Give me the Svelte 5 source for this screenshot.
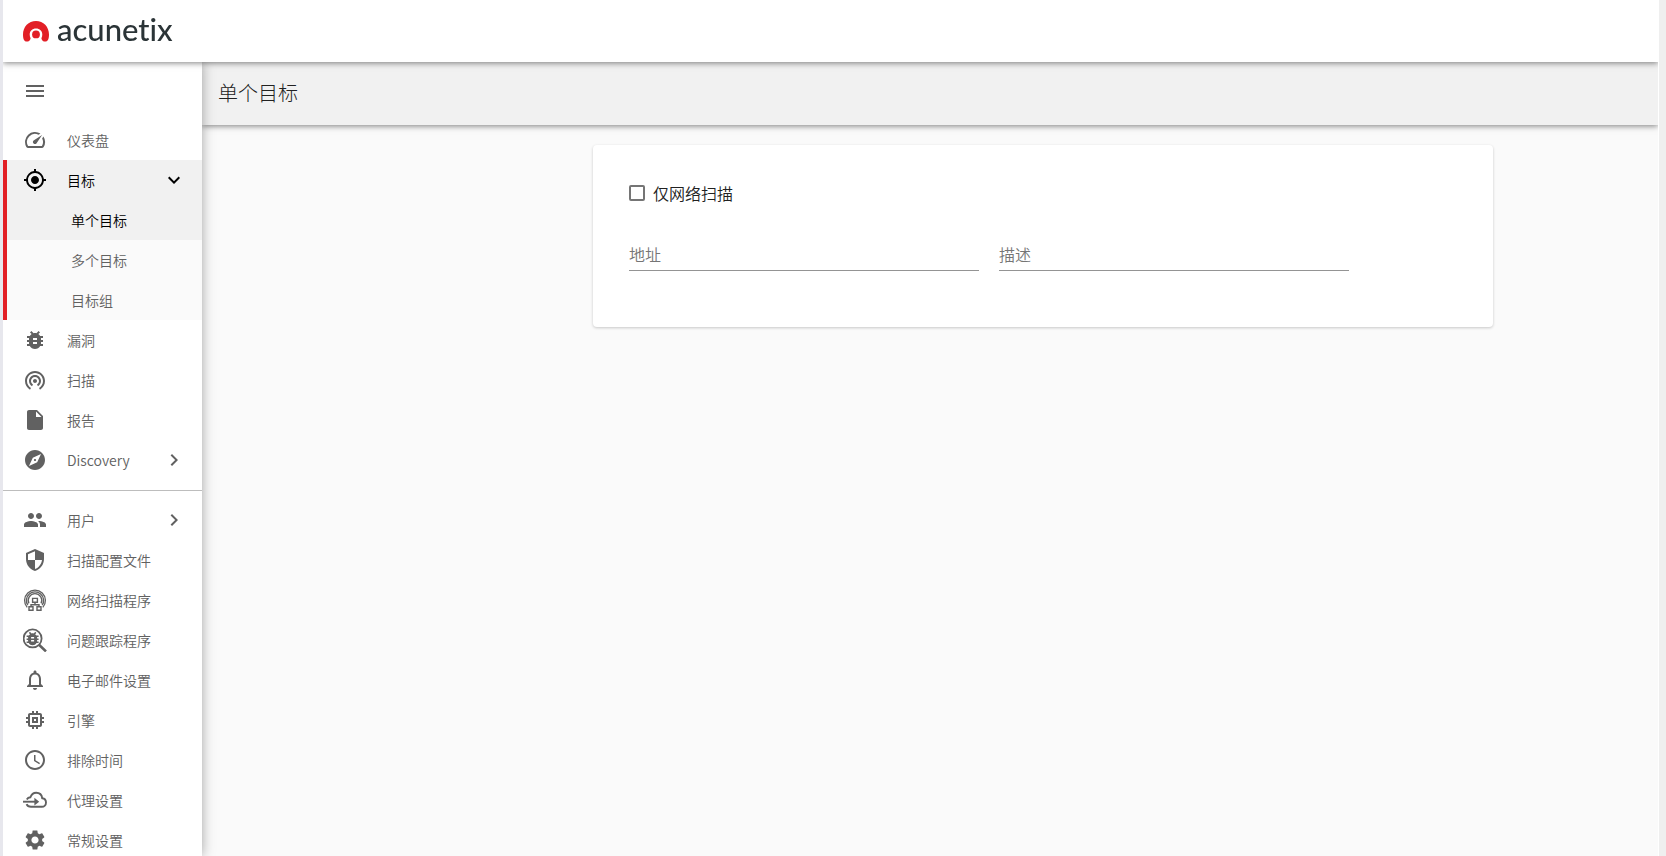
<script lang="ts">
    type Item = { id: string; label: string; icon: string; arrow?: boolean };

    const icons: Record<string, string> = {
        menu: "M3 18h18v-2H3v2zm0-5h18v-2H3v2zm0-7v2h18V6H3z",
        speed: "M20.38 8.57l-1.23 1.85a8 8 0 0 1-.22 7.58H5.07A8 8 0 0 1 15.58 6.85l1.85-1.23A10 10 0 0 0 3.35 19a2 2 0 0 0 1.72 1h13.85a2 2 0 0 0 1.74-1 10 10 0 0 0-.27-10.44zm-9.79 6.84a2 2 0 0 0 2.83 0l5.66-8.49-8.49 5.66a2 2 0 0 0 0 2.83z",
        target: "M12 8c-2.21 0-4 1.79-4 4s1.79 4 4 4 4-1.79 4-4-1.79-4-4-4zm8.94 3A8.994 8.994 0 0 0 13 3.06V1h-2v2.06A8.994 8.994 0 0 0 3.06 11H1v2h2.06A8.994 8.994 0 0 0 11 20.94V23h2v-2.06A8.994 8.994 0 0 0 20.94 13H23v-2h-2.06zM12 19c-3.87 0-7-3.13-7-7s3.13-7 7-7 7 3.13 7 7-3.13 7-7 7z",
        bug: "M20 8h-2.81c-.45-.78-1.07-1.45-1.82-1.96L17 4.41 15.59 3l-2.17 2.17C12.96 5.06 12.49 5 12 5c-.49 0-.96.06-1.41.17L8.41 3 7 4.41l1.62 1.63C7.88 6.55 7.26 7.22 6.81 8H4v2h2.09c-.05.33-.09.66-.09 1v1H4v2h2v1c0 .34.04.67.09 1H4v2h2.81c1.04 1.79 2.97 3 5.19 3s4.15-1.21 5.19-3H20v-2h-2.09c.05-.33.09-.66.09-1v-1h2v-2h-2v-1c0-.34-.04-.67-.09-1H20V8zm-6 8h-4v-2h4v2zm0-4h-4v-2h4v2z",
        scan: "M12 11c-1.1 0-2 .9-2 2s.9 2 2 2 2-.9 2-2-.9-2-2-2zm6 2c0-3.31-2.69-6-6-6s-6 2.69-6 6c0 2.22 1.21 4.15 3 5.19l1-1.74c-1.19-.7-2-1.97-2-3.45 0-2.21 1.79-4 4-4s4 1.79 4 4c0 1.48-.81 2.75-2 3.45l1 1.74c1.79-1.04 3-2.97 3-5.19zM12 3C6.48 3 2 7.48 2 13c0 3.7 2.01 6.92 4.99 8.65l1-1.73C5.61 18.53 4 15.96 4 13c0-4.42 3.58-8 8-8s8 3.58 8 8c0 2.96-1.61 5.53-4 6.92l1 1.73c2.99-1.73 5-4.95 5-8.65 0-5.52-4.48-10-10-10z",
        file: "M6 2c-1.1 0-1.99.9-1.99 2L4 20c0 1.1.89 2 1.99 2H18c1.1 0 2-.9 2-2V8l-6-6H6zm7 7V3.5L18.5 9H13z",
        explore: "M12 10.9c-.61 0-1.1.49-1.1 1.1s.49 1.1 1.1 1.1c.61 0 1.1-.49 1.1-1.1s-.49-1.1-1.1-1.1zM12 2C6.48 2 2 6.48 2 12s4.48 10 10 10 10-4.48 10-10S17.52 2 12 2zm2.19 12.19L6 18l3.81-8.19L18 6l-3.81 8.19z",
        people: "M16 11c1.66 0 2.99-1.34 2.99-3S17.66 5 16 5c-1.66 0-3 1.34-3 3s1.34 3 3 3zm-8 0c1.66 0 2.99-1.34 2.99-3S9.66 5 8 5C6.34 5 5 6.34 5 8s1.34 3 3 3zm0 2c-2.33 0-7 1.17-7 3.5V19h14v-2.5c0-2.33-4.67-3.5-7-3.5zm8 0c-.29 0-.62.02-.97.05 1.16.84 1.97 1.97 1.97 3.45V19h6v-2.5c0-2.33-4.67-3.5-7-3.5z",
        shield: "M12 1L3 5v6c0 5.55 3.84 10.74 9 12 5.16-1.26 9-6.45 9-12V5l-9-4zm0 10.99h7c-.53 4.12-3.28 7.79-7 8.94V12H5V6.3l7-3.11v8.8z",
        bell: "M12 22c1.1 0 2-.9 2-2h-4c0 1.1.89 2 2 2zm6-6v-5c0-3.07-1.64-5.64-4.5-6.32V4c0-.83-.67-1.5-1.5-1.5s-1.5.67-1.5 1.5v.68C7.63 5.36 6 7.92 6 11v5l-2 2v1h16v-1l-2-2zm-2 1H8v-6c0-2.48 1.51-4.5 4-4.5s4 2.02 4 4.5v6z",
        chip: "M15 9H9v6h6V9zm-2 4h-2v-2h2v2zm8-2V9h-2V7c0-1.1-.9-2-2-2h-2V3h-2v2h-2V3H9v2H7c-1.1 0-2 .9-2 2v2H3v2h2v2H3v2h2v2c0 1.1.9 2 2 2h2v2h2v-2h2v2h2v-2h2c1.1 0 2-.9 2-2v-2h2v-2h-2v-2h2zm-4 6H7V7h10v10z",
        clock: "M11.99 2C6.47 2 2 6.48 2 12s4.47 10 9.99 10C17.52 22 22 17.52 22 12S17.52 2 11.99 2zM12 20c-4.42 0-8-3.58-8-8s3.58-8 8-8 8 3.58 8 8-3.58 8-8 8zm.5-13H11v6l5.25 3.15.75-1.23-4.5-2.67z",
        gear: "M19.14 12.94c.04-.3.06-.61.06-.94 0-.32-.02-.64-.07-.94l2.03-1.58c.18-.14.23-.41.12-.61l-1.92-3.32c-.12-.22-.37-.29-.59-.22l-2.39.96c-.5-.38-1.03-.7-1.62-.94l-.36-2.54c-.04-.24-.24-.41-.48-.41h-3.84c-.24 0-.43.17-.47.41l-.36 2.54c-.59.24-1.13.57-1.62.94l-2.39-.96c-.22-.08-.47 0-.59.22L2.74 8.87c-.12.21-.08.47.12.61l2.03 1.58c-.05.3-.09.63-.09.94s.02.64.07.94l-2.03 1.58c-.18.14-.23.41-.12.61l1.92 3.32c.12.22.37.29.59.22l2.39-.96c.5.38 1.03.7 1.62.94l.36 2.54c.05.24.24.41.48.41h3.84c.24 0 .44-.17.47-.41l.36-2.54c.59-.24 1.13-.56 1.62-.94l2.39.96c.22.08.47 0 .59-.22l1.92-3.32c.12-.22.07-.47-.12-.61l-2.01-1.58zM12 15.6c-1.98 0-3.6-1.62-3.6-3.6s1.62-3.6 3.6-3.6 3.6 1.62 3.6 3.6-1.62 3.6-3.6 3.6z",
        right: "M10 6L8.59 7.41 13.17 12l-4.58 4.59L10 18l6-6z",
        down: "M16.59 8.59L12 13.17 7.41 8.59 6 10l6 6 6-6z",
    };

    const targets = [
        {id: "single", label: "单个目标"},
        {id: "multiple", label: "多个目标"},
        {id: "groups", label: "目标组"},
    ];

    const main: Item[] = [
        {id: "vulns", label: "漏洞", icon: "bug"},
        {id: "scans", label: "扫描", icon: "scan"},
        {id: "reports", label: "报告", icon: "file"},
        {id: "discovery", label: "Discovery", icon: "explore", arrow: true},
    ];

    const settings: Item[] = [
        {id: "users", label: "用户", icon: "people", arrow: true},
        {id: "profiles", label: "扫描配置文件", icon: "shield"},
        {id: "network", label: "网络扫描程序", icon: "network"},
        {id: "trackers", label: "问题跟踪程序", icon: "tracker"},
        {id: "email", label: "电子邮件设置", icon: "bell"},
        {id: "engines", label: "引擎", icon: "chip"},
        {id: "excluded", label: "排除时间", icon: "clock"},
        {id: "proxy", label: "代理设置", icon: "proxy"},
        {id: "general", label: "常规设置", icon: "gear"},
    ];

    let current = $state("single");
    let expanded = $state(true);
    let networkOnly = $state(false);
    let address = $state("");
    let description = $state("");
</script>

{#snippet icon(name: string)}
    <svg class="icon" viewBox="0 0 24 24" aria-hidden="true">
        {#if name === "network"}
            <g fill="none" stroke="currentColor">
                <path stroke-width="1.3" d="M4.2 19.4A10.4 10.4 0 1 1 19.8 19.4" />
                <path stroke-width="1.3" d="M4.8 17.2A8.6 8.6 0 1 1 19.2 17.2" />
                <path stroke-width="1.3" d="M5.9 15.4A6.8 6.8 0 1 1 18.1 15.4" />
                <path stroke-width="1.4" d="M9.6 10.4h4.8v3.8H9.6zM12 14.2v2.6M8 18.6v-1.9h8v1.9M6 18.8h4v3.4H6zM14 18.8h4v3.4h-4z" />
            </g>
        {:else if name === "tracker"}
            <circle cx="9.6" cy="10.4" r="9" fill="none" stroke="currentColor" stroke-width="1.8" />
            <path d="M16 16.8l7 6.6" fill="none" stroke="currentColor" stroke-width="2.6" />
            <path transform="translate(.6 1.6) scale(.75)" d={icons.bug} />
        {:else if name === "proxy"}
            <g fill="none" stroke="currentColor" stroke-width="1.9">
                <path d="M3.8 11.4C4.6 10.1 5.8 9.5 7.4 9.3 8.4 6.4 10.5 4.7 13.2 4.7c3.2 0 5.6 2.2 6 5.5 2.2.3 3.8 2 3.8 4.2 0 2.4-1.8 4.4-4.2 4.4H8c-2.1 0-3.7-.9-4.4-2.7" />
                <path d="M0 13.7h13" />
            </g>
            <path d="M11.4 9.8l4.8 3.9-4.8 3.9z" />
        {:else}
            <path d={icons[name]} />
        {/if}
    </svg>
{/snippet}

{#snippet row(item: Item)}
    <a class="row" href="#{item.id}">
        {@render icon(item.icon)}
        <span class="label">{item.label}</span>
        {#if item.arrow}{@render icon("right")}{/if}
    </a>
{/snippet}

<div class="frame">
    <div class="app">
        <header class="topbar">
            <a class="brand" href="#home">
                <svg class="mark" viewBox="0 0 26 21" aria-hidden="true">
                    <path fill="#e21f26" d="M3.6 20.6C1.2 20.6 0 18 0 13.6 0 5.8 5.6 0 13 0s13 5.8 13 13.6c0 4.4-1.2 7-3.6 7-2.2 0-3.9-1.4-4-3.4.6-1.3.9-2.5.9-3.8 0-3.5-2.6-6-6.3-6s-6.3 2.5-6.3 6c0 1.3.3 2.5.9 3.8-.1 2-1.8 3.4-4 3.4z" />
                    <circle cx="13" cy="13.4" r="3.9" fill="#e21f26" />
                </svg>
                <span class="wordmark">acunetix</span>
            </a>
        </header>

        <div class="body">
            <nav class="sidebar">
                <button class="toggle" aria-label="菜单">{@render icon("menu")}</button>
                <a class="row" href="#dashboard">
                    {@render icon("speed")}
                    <span class="label">仪表盘</span>
                </a>
                <div class="group">
                    <button class="row active" aria-expanded={expanded} onclick={() => (expanded = !expanded)}>
                        {@render icon("target")}
                        <span class="label">目标</span>
                        {@render icon(expanded ? "down" : "right")}
                    </button>
                    {#if expanded}
                        {#each targets as t (t.id)}
                            <a class="sub" class:active={current === t.id} href="#{t.id}"
                               onclick={() => (current = t.id)}>{t.label}</a>
                        {/each}
                    {/if}
                </div>
                {#each main as item (item.id)}
                    {@render row(item)}
                {/each}
                <hr />
                {#each settings as item (item.id)}
                    {@render row(item)}
                {/each}
            </nav>

            <main>
                <div class="heading"><h1>单个目标</h1></div>
                <div class="content">
                    <form class="card">
                        <label class="check">
                            <input type="checkbox" bind:checked={networkOnly} />
                            <span>仅网络扫描</span>
                        </label>
                        <div class="fields">
                            <input type="text" aria-label="地址" placeholder="地址" bind:value={address} />
                            <input type="text" aria-label="描述" placeholder="描述" bind:value={description} />
                        </div>
                    </form>
                </div>
            </main>
        </div>
    </div>
</div>

<style>
    :global(body) {
        margin: 0;
        background: #efefef;
    }

    .frame {
        box-sizing: border-box;
        height: 100vh;
        padding-right: 7px;
        border-left: 3px solid #e7e7ed;
        font-family: "Noto Sans CJK SC", "Noto Sans", sans-serif;
        font-weight: 350;
        color: #212121;
    }

    .app {
        display: flex;
        flex-direction: column;
        height: 100%;
        overflow: hidden;
        border-right: 1px solid #fff;
        background: #fafafa;
    }

    .topbar {
        position: relative;
        z-index: 3;
        display: flex;
        flex: none;
        align-items: center;
        height: 62px;
        padding-left: 20px;
        background: #fff;
        box-shadow: 0 1px 6px rgba(0, 0, 0, 0.5);
    }

    .brand {
        display: flex;
        align-items: center;
        gap: 8px;
        color: #2b3437;
        text-decoration: none;
    }

    .mark {
        width: 26px;
        height: 21px;
    }

    .wordmark {
        padding-bottom: 4px;
        font-family: Lato, sans-serif;
        font-size: 31px;
        font-variant-ligatures: none;
        font-weight: 500;
        line-height: 36px;
    }

    .body {
        display: flex;
        flex: 1;
        min-height: 0;
    }

    .sidebar {
        position: relative;
        z-index: 2;
        flex: none;
        width: 199px;
        overflow-y: auto;
        scrollbar-width: none;
        background: #fff;
        box-shadow: 0 0 12px rgba(0, 0, 0, 0.35);
    }

    .icon {
        flex: none;
        width: 24px;
        height: 24px;
        fill: currentColor;
    }

    .toggle {
        display: flex;
        align-items: center;
        height: 58px;
        padding: 0 20px;
        border: 0;
        background: none;
        color: #616161;
        cursor: pointer;
    }

    .row {
        display: flex;
        align-items: center;
        box-sizing: border-box;
        width: 100%;
        height: 40px;
        padding: 0 16px 0 20px;
        border: 0;
        background: none;
        color: #616161;
        font-family: inherit;
        font-size: 14px;
        font-weight: inherit;
        text-align: left;
        text-decoration: none;
        cursor: pointer;
    }

    .label {
        flex: 1;
        padding-left: 20px;
    }

    .group {
        border-left: 4px solid #e21f26;
        background: #fafafa;
    }

    .group .row {
        padding-left: 16px;
    }

    .sub {
        display: block;
        height: 40px;
        padding-left: 64px;
        color: #616161;
        font-size: 14px;
        line-height: 40px;
        text-decoration: none;
    }

    .row.active,
    .sub.active {
        background: #f1f1f1;
        color: #000;
    }

    hr {
        height: 1px;
        margin: 10px 0 9px;
        border: 0;
        background: #bdbdbd;
    }

    main {
        flex: 1;
        min-width: 0;
    }

    .heading {
        position: relative;
        display: flex;
        align-items: center;
        height: 63px;
        padding-left: 16px;
        background: #f1f1f1;
        box-shadow: 0 1px 6px rgba(0, 0, 0, 0.5);
    }

    h1 {
        margin: 0;
        padding-bottom: 2px;
        font-size: 20px;
        font-weight: 300;
        line-height: 32px;
    }

    .content {
        padding: 20px 0 20px 226px;
    }

    .card {
        box-sizing: border-box;
        max-width: 900px;
        margin: 0 auto;
        padding: 36px 36px 56px;
        border-radius: 4px;
        background: #fff;
        box-shadow: 0 1px 3px rgba(0, 0, 0, 0.2);
    }

    .check {
        display: flex;
        align-items: center;
        gap: 8px;
        width: fit-content;
        font-size: 16px;
        line-height: 24px;
    }

    .check input {
        appearance: none;
        width: 16px;
        height: 16px;
        margin: 0;
        border: 2px solid #757575;
        border-radius: 2px;
    }

    .check input:checked {
        background: #757575;
    }

    .fields {
        display: flex;
        gap: 20px;
        margin-top: 30px;
    }

    .fields input {
        box-sizing: border-box;
        width: 350px;
        min-width: 0;
        height: 36px;
        padding: 2px 0 0;
        border: 0;
        border-bottom: 1px solid #949494;
        outline: none;
        background: none;
        font-family: inherit;
        font-size: 16px;
        font-weight: inherit;
    }

    .fields input::placeholder {
        color: #757575;
    }
</style>
